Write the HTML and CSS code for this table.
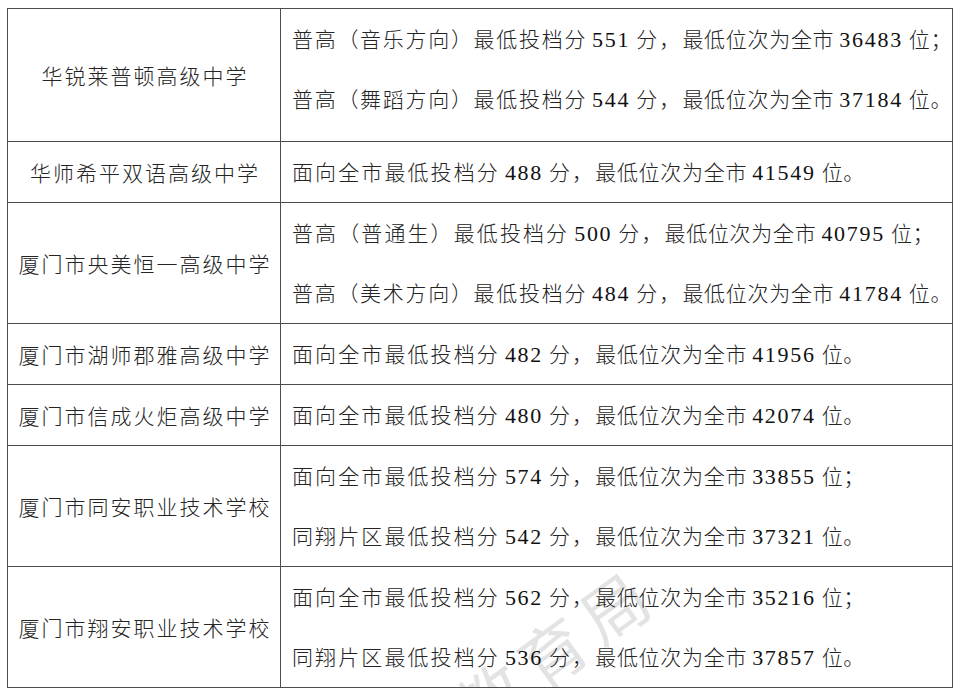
FILE: index.html
```html
<!DOCTYPE html>
<html lang="zh-CN">
<head>
<meta charset="utf-8">
<title>录取分数线</title>
<link rel="stylesheet" href="styles.css">
</head>
<body>
<div class="watermark" aria-hidden="true">厦门市教育局</div>
<table class="scores">
  <colgroup><col class="c-name"><col class="c-info"></colgroup>
  <tr class="h-first">
    <td class="name">华锐莱普顿高级中学</td>
    <td class="info first">
      <p class="line"><span class="a p">普高（音乐方向）最低投档分</span><span class="n">551</span><span class="a">分，</span><span class="b">最低位次为全市</span><span class="n">36483</span><span class="b">位；</span></p>
      <p class="line"><span class="a p">普高（舞蹈方向）最低投档分</span><span class="n">544</span><span class="a">分，</span><span class="b">最低位次为全市</span><span class="n">37184</span><span class="b">位。</span></p>
    </td>
  </tr>
  <tr class="h-one">
    <td class="name">华师希平双语高级中学</td>
    <td class="info">
      <p class="line"><span class="a">面向全市最低投档分</span><span class="n">488</span><span class="a">分，</span><span class="b">最低位次为全市</span><span class="n">41549</span><span class="b">位。</span></p>
    </td>
  </tr>
  <tr class="h-two">
    <td class="name">厦门市央美恒一高级中学</td>
    <td class="info">
      <p class="line"><span class="a">普高（普通生）最低投档分</span><span class="n">500</span><span class="a">分，</span><span class="b">最低位次为全市</span><span class="n">40795</span><span class="b">位；</span></p>
      <p class="line"><span class="a p">普高（美术方向）最低投档分</span><span class="n">484</span><span class="a">分，</span><span class="b">最低位次为全市</span><span class="n">41784</span><span class="b">位。</span></p>
    </td>
  </tr>
  <tr class="h-one-b">
    <td class="name">厦门市湖师郡雅高级中学</td>
    <td class="info">
      <p class="line"><span class="a">面向全市最低投档分</span><span class="n">482</span><span class="a">分，</span><span class="b">最低位次为全市</span><span class="n">41956</span><span class="b">位。</span></p>
    </td>
  </tr>
  <tr class="h-one">
    <td class="name">厦门市信成火炬高级中学</td>
    <td class="info">
      <p class="line"><span class="a">面向全市最低投档分</span><span class="n">480</span><span class="a">分，</span><span class="b">最低位次为全市</span><span class="n">42074</span><span class="b">位。</span></p>
    </td>
  </tr>
  <tr class="h-two">
    <td class="name">厦门市同安职业技术学校</td>
    <td class="info">
      <p class="line"><span class="a">面向全市最低投档分</span><span class="n">574</span><span class="a">分，</span><span class="b">最低位次为全市</span><span class="n">33855</span><span class="b">位；</span></p>
      <p class="line"><span class="a">同翔片区最低投档分</span><span class="n">542</span><span class="a">分，</span><span class="b">最低位次为全市</span><span class="n">37321</span><span class="b">位。</span></p>
    </td>
  </tr>
  <tr class="h-two">
    <td class="name">厦门市翔安职业技术学校</td>
    <td class="info">
      <p class="line"><span class="a">面向全市最低投档分</span><span class="n">562</span><span class="a">分，</span><span class="b">最低位次为全市</span><span class="n">35216</span><span class="b">位；</span></p>
      <p class="line"><span class="a">同翔片区最低投档分</span><span class="n">536</span><span class="a">分，</span><span class="b">最低位次为全市</span><span class="n">37857</span><span class="b">位。</span></p>
    </td>
  </tr>
</table>
</body>
</html>
```

FILE: styles.css
```css
html {
  background: #ffffff;
  overflow: hidden;
}

body {
  margin: 8px 0 0 7px;
  font-family: "Noto Sans CJK SC", "Noto Sans", sans-serif;
  font-weight: 300;
  color: #242424;
  position: relative;
}

.scores {
  border-collapse: collapse;
  table-layout: fixed;
  width: 946px;
  position: relative;
}

.c-name { width: 273px; }

.scores td {
  border: 1px solid #4d4d4d;
  padding: 0;
  font-size: 21px;
  vertical-align: middle;
}

.h-first { height: 132px; }
.h-one { height: 60px; }
.h-one-b { height: 61px; }
.h-two { height: 120px; }

.scores .name {
  text-align: center;
  letter-spacing: 2px;
  padding-left: 2px;
  white-space: nowrap;
}

.scores .info {
  padding-left: 11px;
}

.scores .info.first {
  padding-bottom: 12px;
}

.line {
  margin: 0;
  line-height: 58px;
  white-space: nowrap;
}

.a { letter-spacing: 2.1px; }
.a.p { letter-spacing: 1.7px; }
.b { letter-spacing: 0.7px; }

.n {
  font-family: "Liberation Serif", "DejaVu Serif", serif;
  font-weight: 400;
  font-size: 22px;
  letter-spacing: 1.7px;
  color: #111111;
  margin: 0 6px 0 5px;
}

.watermark {
  position: absolute;
  left: 184px;
  top: 539px;
  width: 456px;
  height: 66px;
  line-height: 66px;
  font-size: 66px;
  font-weight: 400;
  letter-spacing: 10px;
  white-space: nowrap;
  color: rgba(0, 0, 0, 0.11);
  transform: rotate(-36deg);
  transform-origin: right center;
  pointer-events: none;
}
```
